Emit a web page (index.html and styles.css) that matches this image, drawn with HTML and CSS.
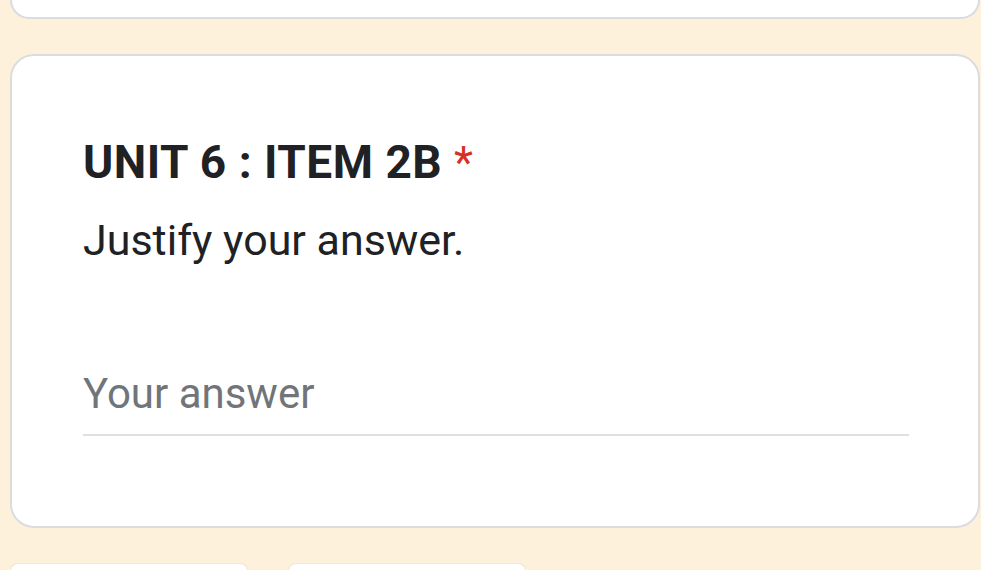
FILE: index.html
```html
<!DOCTYPE html>
<html>
<head>
<meta charset="utf-8">
<link rel="stylesheet" href="styles.css">
</head>
<body>
<div class="page">
  <div class="card card-top"></div>
  <div class="card question">
    <div class="title">UNIT 6 : ITEM 2B <span class="req">*</span></div>
    <div class="desc">Justify your answer.</div>
    <div class="answer">
      <div class="placeholder">Your answer</div>
      <div class="line"></div>
    </div>
  </div>
  <div class="buttons">
    <div class="btn"></div>
    <div class="btn"></div>
  </div>
</div>
</body>
</html>
```
FILE: styles.css
```css
html, body {
  margin: 0;
  padding: 0;
  background: #fef1dc;
  font-family: Roboto, "Noto Sans", sans-serif;
  overflow: hidden;
}
.page {
  display: flex;
  flex-direction: column;
  padding: 0 0 0 10px;
  height: 570px;
  box-sizing: border-box;
}
.card {
  background: #fff;
  border: 2px solid #dadce0;
  border-radius: 24px;
  width: 970px;
  box-sizing: border-box;
}
.card-top {
  height: 19px;
  border-top: none;
  border-radius: 0 0 24px 24px;
  flex: none;
}
.question {
  margin-top: 35px;
  height: 474px;
  flex: none;
  padding: 80px 71px 0 71px;
}
.title {
  font-size: 46px;
  font-weight: 700;
  color: #202124;
  line-height: 52px;
  letter-spacing: 0.5px;
}
.req {
  color: #d93025;
  font-weight: 400;
  font-size: 44px;
  letter-spacing: 0;
}
.desc {
  font-size: 43px;
  color: #202124;
  line-height: 52px;
  margin-top: 25px;
}
.answer {
  margin-top: 102px;
}
.placeholder {
  font-size: 42px;
  color: #70757a;
  line-height: 52px;
}
.line {
  height: 2px;
  background: #e0e0e0;
  margin-top: 14px;
  width: 826px;
}
.buttons {
  display: flex;
  gap: 40px;
  margin-top: 35px;
}
.btn {
  width: 236px;
  height: 7px;
  background: #fff;
  border-radius: 16px 16px 0 0;
  border: 1px solid #f3e6d0;
  border-bottom: none;
}
```
